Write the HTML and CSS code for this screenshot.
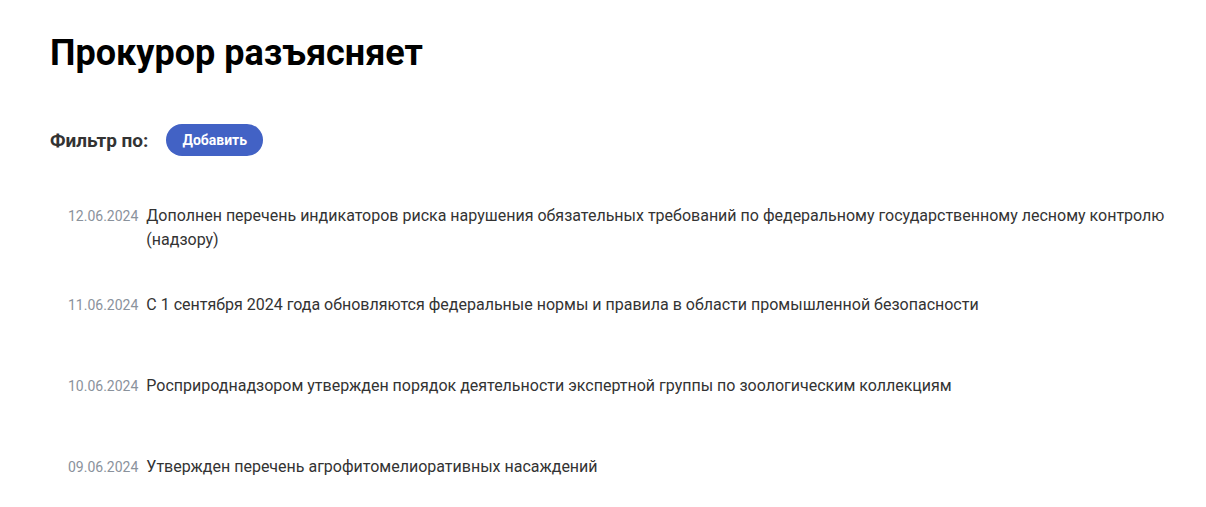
FILE: index.html
```html
<!DOCTYPE html>
<html lang="ru">
<head>
    <meta charset="UTF-8">
    <meta name="viewport" content="width=device-width, initial-scale=1.0">
    <title>Прокурор разъясняет</title>
    <link rel="stylesheet" href="styles.css">
</head>
<body>
    <div class="page">
        <h1>Прокурор разъясняет</h1>

        <!-- Filter -->
        <div class="filter">
            <span class="filter-label">Фильтр по:</span>
            <button class="filter-add">Добавить</button>
        </div>

        <!-- News list -->
        <ul class="news">
            <li class="news-item">
                <span class="news-date">12.06.2024</span>
                <a href="#" class="news-title">Дополнен перечень индикаторов риска нарушения обязательных требований по федеральному государственному лесному контролю (надзору)</a>
            </li>
            <li class="news-item">
                <span class="news-date">11.06.2024</span>
                <a href="#" class="news-title">С 1 сентября 2024 года обновляются федеральные нормы и правила в области промышленной безопасности</a>
            </li>
            <li class="news-item">
                <span class="news-date">10.06.2024</span>
                <a href="#" class="news-title">Росприроднадзором утвержден порядок деятельности экспертной группы по зоологическим коллекциям</a>
            </li>
            <li class="news-item">
                <span class="news-date">09.06.2024</span>
                <a href="#" class="news-title">Утвержден перечень агрофитомелиоративных насаждений</a>
            </li>
        </ul>
    </div>
</body>
</html>
```

FILE: styles.css
```css
* {
    margin: 0;
    padding: 0;
    box-sizing: border-box;
}

body {
    font-family: Roboto, 'Noto Sans', sans-serif;
    background: #fff;
    color: #333;
}

.page {
    padding: 30px 36px 0 50px;
}

h1 {
    font-size: 36px;
    font-weight: 700;
    color: #000;
    line-height: 46px;
}

.filter {
    display: flex;
    align-items: center;
    gap: 18px;
    margin-top: 48px;
}

.filter-label {
    font-size: 19px;
    font-weight: 700;
    color: #333;
}

.filter-add {
    height: 32px;
    padding: 0 16px;
    border: none;
    border-radius: 16px;
    background: #4262c5;
    color: #fff;
    font-family: inherit;
    font-size: 14px;
    font-weight: 700;
    cursor: pointer;
}

.news {
    list-style: none;
    margin-top: 48px;
    padding-left: 18px;
}

.news-item {
    display: flex;
    align-items: baseline;
    gap: 8px;
    min-height: 40px;
    margin-bottom: 41px;
}

.news-date {
    flex: none;
    font-size: 14px;
    color: #8a929c;
}

.news-title {
    font-size: 16px;
    line-height: 24px;
    color: #333;
    text-decoration: none;
}
```
